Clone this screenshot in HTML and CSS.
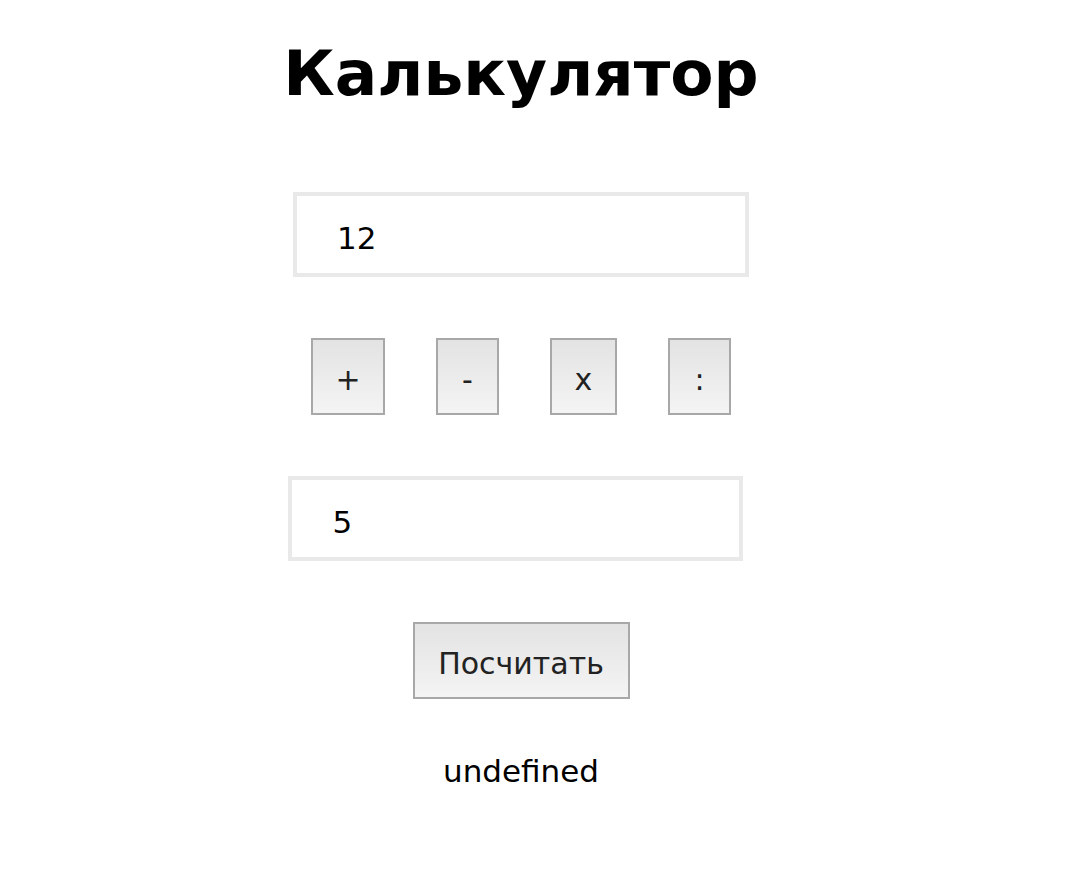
FILE: index.html
```html
<!DOCTYPE html>
<html lang="ru">
<head>
<meta charset="utf-8">
<title>Калькулятор</title>
<link rel="stylesheet" href="styles.css">
</head>
<body>
<main class="calc">
  <h1 class="title">Калькулятор</h1>
  <input class="field" type="text" value="12">
  <div class="ops">
    <button class="btn op">+</button>
    <button class="btn op">-</button>
    <button class="btn op">x</button>
    <button class="btn op">:</button>
  </div>
  <input class="field field-second" type="text" value="5">
  <button class="btn calc-btn">Посчитать</button>
  <div class="result">undefined</div>
</main>
</body>
</html>
```

FILE: styles.css
```css
html, body {
  margin: 0;
  padding: 0;
  background: #fff;
}
body {
  font-family: "DejaVu Sans", Verdana, sans-serif;
  color: #000;
}
.calc {
  width: 1042px;
  display: flex;
  flex-direction: column;
  align-items: center;
  padding-top: 36px;
}
.title {
  margin: 0;
  font-size: 63px;
  line-height: 76px;
  font-weight: bold;
}
.field {
  box-sizing: border-box;
  width: 456px;
  height: 85px;
  margin-top: 80px;
  border: 4px solid #e9e9e9;
  padding: 7px 0 0 40px;
  font-family: "DejaVu Sans", Verdana, sans-serif;
  font-size: 31px;
  color: #000;
  background: #fff;
  outline: none;
}
.field-second {
  margin-top: 61px;
  margin-right: 12px;
  width: 455px;
  padding-left: 41px;
}
.ops {
  display: flex;
  gap: 51px;
  margin-top: 61px;
}
.btn {
  box-sizing: border-box;
  height: 77px;
  border: 2px solid #a8a8a8;
  border-radius: 0;
  background: linear-gradient(#e3e3e3, #f4f4f4);
  font-family: "DejaVu Sans", Verdana, sans-serif;
  font-size: 30px;
  color: #222;
  padding: 5px 22px 0;
  line-height: 35px;
  text-align: center;
}
.op {
  min-width: 63px;
  padding: 5px 0 0;
}
.op:first-child {
  width: 74px;
}
.op:nth-child(3) {
  width: 67px;
}
.calc-btn {
  margin-top: 61px;
  width: 217px;
  padding: 5px 0 0;
  font-size: 30px;
}
.result {
  margin-top: 55px;
  font-size: 31px;
  line-height: 35px;
}
```
